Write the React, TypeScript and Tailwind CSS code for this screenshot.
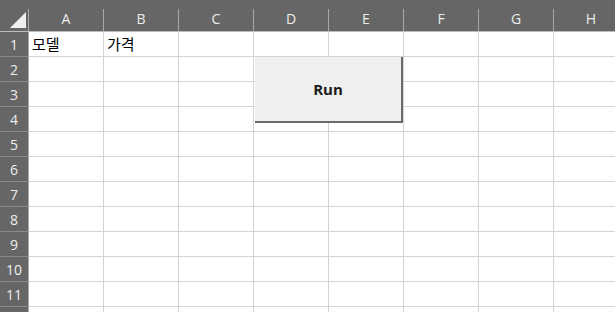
const cols = ["A", "B", "C", "D", "E", "F", "G", "H"];
const rows = [1, 2, 3, 4, 5, 6, 7, 8, 9, 10, 11, 12];

const cells: Record<string, string> = {
  A1: "모델",
  B1: "가격",
};

export default function App() {
  return (
    <div
      className="relative w-[615px] h-[312px] overflow-hidden bg-white"
      style={{ fontFamily: "'Open Sans', 'Noto Sans CJK KR', sans-serif" }}
    >
      {/* column header */}
      <div className="flex h-[32px] bg-[#666666] border-b border-[#bdbdbd]">
        <div className="relative flex w-[29px] shrink-0">
          <div className="flex-1 flex items-end justify-end pr-[2px] pb-[3px]">
            <svg width="16" height="16" viewBox="0 0 16 16">
              <polygon points="0,16 16,16 16,0" fill="#efefef" />
            </svg>
          </div>
          <div className="w-px self-end h-[22px] bg-[#a8a8a8]" />
        </div>
        {cols.map((c) => (
          <div key={c} className="flex w-[75px] shrink-0">
            <div className="flex-1 flex items-center justify-center pt-[5px] text-[14px] text-[#ededed]">
              {c}
            </div>
            <div className="w-px self-end h-[22px] bg-[#a8a8a8]" />
          </div>
        ))}
      </div>

      {/* rows */}
      {rows.map((r) => (
        <div key={r} className="flex h-[25px]">
          <div className="w-[29px] shrink-0 bg-[#666666] border-r border-[#a8a8a8] flex">
            <div className="flex-1 flex items-center justify-center text-[14px] text-[#ededed] border-b border-[#8a8a8a]">
              {r < 12 ? r : ""}
            </div>
          </div>
          {cols.map((c) => (
            <div
              key={c}
              className="w-[75px] shrink-0 border-r border-b border-[#d4d4d4] flex items-center px-[3px] text-[15px] text-black"
              style={{ fontFamily: "'Noto Sans CJK KR', sans-serif" }}
            >
              {cells[c + r] ?? ""}
            </div>
          ))}
        </div>
      ))}

      {/* floating button */}
      <button className="absolute left-[255px] top-[57px] w-[148px] h-[66px] bg-[#efefef] border-r-2 border-b-2 border-[#6b6b6b] flex items-center justify-center text-[15px] font-bold text-[#1b1b1b]">
        Run
      </button>
    </div>
  );
}
